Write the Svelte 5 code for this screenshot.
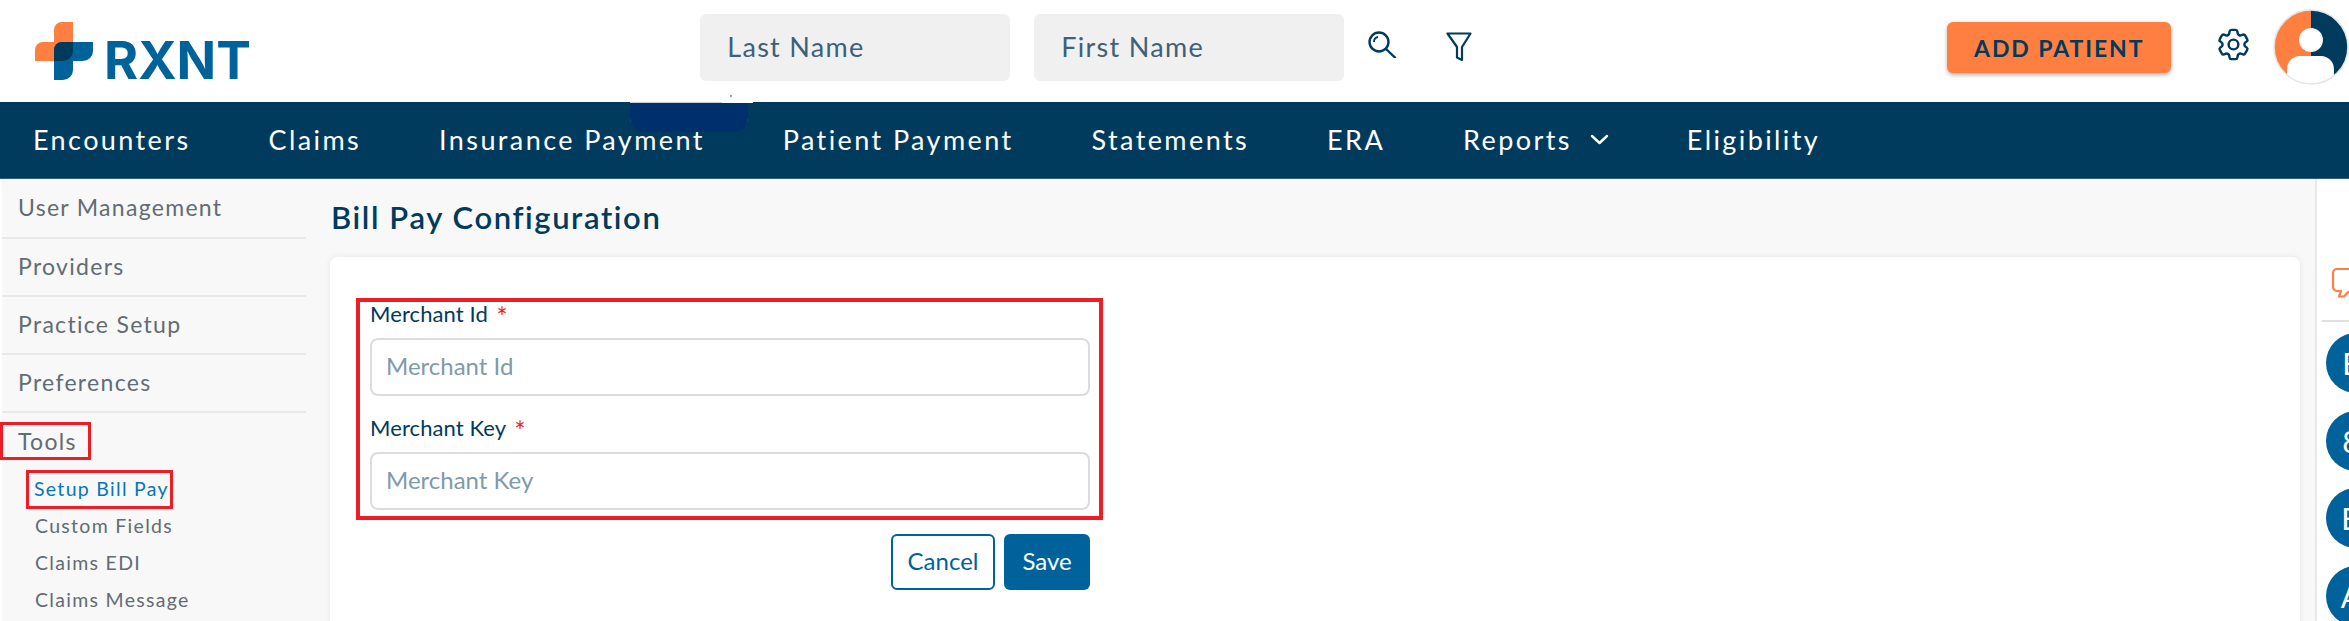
<script>
  const nav = ['Encounters', 'Claims', 'Insurance Payment', 'Patient Payment', 'Statements', 'ERA', 'Reports', 'Eligibility'];
  const side = ['User Management', 'Providers', 'Practice Setup', 'Preferences'];
  const sub = ['Custom Fields', 'Claims EDI', 'Claims Message'];
  const badges = ['E', '8', 'B', 'A'];
</script>

<div class="page">
  <header class="top">
    <div class="logo">
      <svg class="mark" width="58" height="58" viewBox="0 0 58 58">
        <path d="M19 20V8a8 8 0 0 1 8-8h11v39H0V28a8 8 0 0 1 8-8z" fill="#ff7f41" />
        <path d="M19 28a8 8 0 0 1 8-8h31v9a10 10 0 0 1-10 10H38v9a10 10 0 0 1-10 10h-9z" fill="#00629b" />
        <path d="M19 28a8 8 0 0 1 8-8h11v9a10 10 0 0 1-10 10h-9z" fill="#003a5d" />
      </svg>
      <span class="brand">RXNT</span>
    </div>
    <div class="search">
      <div class="field">Last Name</div>
      <div class="field">First Name</div>
      <svg class="ic-search" width="30" height="27" viewBox="0 0 30 27" fill="none" stroke="#003a5d" stroke-width="2.4">
        <circle cx="12" cy="11" r="9.500" />
        <path d="M7 11a5 5 0 0 1 4-5" stroke-width="1.8" />
        <path d="M19 18l9 8.500" stroke-linecap="round" />
      </svg>
      <svg class="ic-filter" width="26" height="30" viewBox="0 0 26 30" fill="none" stroke="#003a5d" stroke-width="2.2" stroke-linejoin="round">
        <path d="M1.500 1.500h23L16 15v13l-5-2.500V15z" />
      </svg>
    </div>
    <button class="add">ADD PATIENT</button>
    <svg class="ic-gear" width="39" height="39" viewBox="0 0 24 24" fill="none" stroke="#003a5d" stroke-width="1.5">
      <path d="M9.594 3.94c.09-.542.56-.94 1.11-.94h2.593c.55 0 1.02.398 1.11.94l.213 1.281c.063.374.313.686.645.87.074.04.147.083.22.127.325.196.72.257 1.075.124l1.217-.456a1.125 1.125 0 0 1 1.37.49l1.296 2.247a1.125 1.125 0 0 1-.26 1.431l-1.003.827c-.293.241-.438.613-.43.992a7.723 7.723 0 0 1 0 .255c-.008.378.137.75.43.991l1.004.827c.424.35.534.955.26 1.43l-1.298 2.247a1.125 1.125 0 0 1-1.369.491l-1.217-.456c-.355-.133-.75-.072-1.076.124a6.47 6.47 0 0 1-.22.128c-.331.183-.581.495-.644.869l-.213 1.281c-.09.543-.56.94-1.11.94h-2.594c-.55 0-1.019-.398-1.11-.94l-.213-1.281c-.062-.374-.312-.686-.644-.87a6.52 6.52 0 0 1-.22-.127c-.325-.196-.72-.257-1.076-.124l-1.217.456a1.125 1.125 0 0 1-1.369-.49l-1.297-2.247a1.125 1.125 0 0 1 .26-1.431l1.004-.827c.292-.24.437-.613.43-.991a6.932 6.932 0 0 1 0-.255c.007-.38-.138-.751-.43-.992l-1.004-.827a1.125 1.125 0 0 1-.26-1.43l1.297-2.247a1.125 1.125 0 0 1 1.37-.491l1.216.456c.356.133.751.072 1.076-.124.072-.044.146-.086.22-.128.332-.183.582-.495.644-.869l.214-1.28Z" />
      <circle cx="12" cy="12" r="3" />
    </svg>
    <svg class="avatar" width="76" height="76" viewBox="0 0 76 76">
      <defs><clipPath id="av"><circle cx="38" cy="38" r="37" /></clipPath></defs>
      <g clip-path="url(#av)">
        <rect width="38" height="76" fill="#ff7f41" />
        <rect x="38" width="38" height="76" fill="#003a5d" />
        <circle cx="38" cy="31" r="12" fill="#fff" />
        <rect x="14" y="47" width="47" height="40" rx="13" fill="#fff" />
      </g>
      <circle cx="38" cy="38" r="37" fill="none" stroke="#e4e6e8" stroke-width="1.5" />
    </svg>
  </header>

  <nav class="nav">
    {#each nav as item}
      <span class="nav-item">
        {item}
        {#if item === 'Reports'}
          <svg class="chev" width="19" height="11" viewBox="0 0 19 11" fill="none" stroke="#fff" stroke-width="2.4" stroke-linecap="round" stroke-linejoin="round"><path d="M2 2l7.500 7L17 2" /></svg>
        {/if}
      </span>
    {/each}
    <div class="smudge"></div>
    <div class="notch"></div>
  </nav>

  <div class="body">
    <aside class="side">
      {#each side as s}
        <div class="side-item">{s}</div>
      {/each}
      <div class="tools"><span>Tools</span></div>
      <div class="active"><span>Setup Bill Pay</span></div>
      {#each sub as s}
        <div class="sub">{s}</div>
      {/each}
    </aside>

    <main class="main">
      <h1>Bill Pay Configuration</h1>
      <section class="card">
        <div class="marked">
          <label for="mid">Merchant Id <b>*</b></label>
          <input id="mid" placeholder="Merchant Id" />
          <label class="second" for="mkey">Merchant Key <b>*</b></label>
          <input id="mkey" placeholder="Merchant Key" />
        </div>
        <div class="actions">
          <button class="cancel">Cancel</button>
          <button class="save">Save</button>
        </div>
      </section>
    </main>

    <aside class="rail">
      <div class="chat">
        <svg width="40" height="30" viewBox="0 0 40 30" fill="none" stroke="#ff7f41" stroke-width="2.2" stroke-linejoin="round">
          <path d="M5 1h32a4 4 0 0 1 4 4v14a4 4 0 0 1-4 4H20c-2 0-5 1-8 5.500L7 28.500l2-5.500H5a4 4 0 0 1-4-4V5a4 4 0 0 1 4-4z" />
        </svg>
      </div>
      {#each badges as b}
        <div class="badge">{b}</div>
      {/each}
    </aside>
  </div>
</div>

<style>
  :global(body) {
    margin: 0;
    background: #fff;
  }
  .page {
    width: 2349px;
    height: 621px;
    overflow: hidden;
    font-family: Lato, "Noto Sans", sans-serif;
    color: #003a5d;
  }
  .top {
    height: 102px;
    display: flex;
    align-items: center;
    background: #fff;
    position: relative;
  }
  .logo {
    display: flex;
    align-items: flex-start;
    margin: 10px 0 0 35px;
    width: 666px;
  }
  .brand {
    font-family: Inter, sans-serif;
    font-weight: 700;
    font-size: 52px;
    line-height: 58px;
    color: #00629b;
    margin: 10px 0 0 11px;
  }
  .search {
    display: flex;
    align-items: center;
    gap: 24px;
    width: 1248.500px;
    margin-top: -7px;
  }
  .field {
    width: 310px;
    height: 67px;
    box-sizing: border-box;
    background: #f0f0f0;
    border-radius: 6px;
    padding-left: 27px;
    font-size: 27px;
    letter-spacing: 1.3px;
    line-height: 66px;
    color: #3e6078;
  }
  .ic-search {
    margin-left: -1px;
    margin-bottom: 6px;
  }
  .ic-filter {
    margin-left: 25px;
    margin-bottom: 2px;
  }
  .add {
    width: 224px;
    height: 51px;
    border: 0;
    border-radius: 6px;
    background: #ff7f41;
    color: #003a5d;
    font: 700 23px Lato, sans-serif;
    letter-spacing: 1.9px;
    box-shadow: 0 2px 4px rgba(0, 0, 0, 0.3);
    margin-top: -7px;
  }
  .ic-gear {
    margin: -14px 0 0 43px;
  }
  .avatar {
    margin: -9px 0 0 20px;
  }
  .nav {
    height: 76px;
    background: #003a5d;
    display: flex;
    align-items: center;
    gap: 78px;
    padding-left: 33px;
    position: relative;
    border-bottom: 1px solid #2c5f7e;
    box-sizing: content-box;
  }
  .nav-item {
    font-size: 27px;
    letter-spacing: 2.400px;
    color: #fff;
    display: flex;
    align-items: center;
    gap: 18px;
    margin-top: -2px;
  }
  .smudge {
    position: absolute;
    left: 630px;
    top: 1px;
    width: 118px;
    height: 29px;
    background: #00306b;
    border-radius: 0 0 14px 14px;
    box-shadow: 0 -1px 0 #c4ccd8;
  }
  .notch {
    position: absolute;
    left: 722px;
    top: -1px;
    width: 31px;
    height: 2px;
    background: #fff;
  }
  .notch::before {
    content: "";
    position: absolute;
    left: 8px;
    top: -6px;
    width: 2px;
    height: 2px;
    background: #8f9bb0;
  }
  .body {
    display: flex;
    height: 442px;
  }
  .side {
    width: 304px;
    margin-left: 2px;
    padding-right: 2px;
    flex-shrink: 0;
    background: #f8f8f8;
    font-size: 23px;
    letter-spacing: 1.3px;
    color: #636b74;
    box-sizing: content-box;
  }
  .side-item {
    height: 56px;
    line-height: 54px;
    padding-left: 16px;
    border-bottom: 2px solid #e9e9e9;
  }
  .side-item:first-child {
    height: 58px;
    line-height: 56px;
  }
  .tools {
    margin: 9px 0 0 -2px;
  }
  .tools span {
    display: block;
    box-sizing: border-box;
    width: 91px;
    height: 38px;
    line-height: 32px;
    padding-left: 15px;
    border: 3.500px solid #ee1c25;
  }
  .active {
    margin: 10px 0 0 24px;
    font-size: 19.500px;
    color: #0a74b9;
  }
  .active span {
    display: block;
    box-sizing: border-box;
    width: 147px;
    height: 39px;
    line-height: 32px;
    padding-left: 5px;
    border: 3.500px solid #ee1c25;
    white-space: nowrap;
  }
  .sub {
    height: 37px;
    line-height: 34px;
    padding-left: 33px;
    font-size: 19.500px;
  }
  .main {
    width: 2009px;
    flex-shrink: 0;
    box-sizing: border-box;
    background: #f8f8f8;
    padding: 0 15px 0 22px;
    border-right: 2px solid #e8e8e8;
  }
  h1 {
    margin: 0 0 0 1px;
    height: 78px;
    line-height: 76px;
    font-size: 31px;
    font-weight: 600;
    letter-spacing: 1.600px;
  }
  .card {
    height: 400px;
    background: #fff;
    border-radius: 8px;
    box-shadow: 0 0 6px rgba(0, 0, 0, 0.08);
    padding: 41px 0 0 26px;
    box-sizing: border-box;
  }
  .marked {
    width: 747px;
    height: 222px;
    box-sizing: border-box;
    border: 4px solid #ee1c25;
    padding: 0 9px 0 10px;
    display: flex;
    flex-direction: column;
  }
  label {
    display: block;
    height: 36px;
    line-height: 24px;
    font-size: 22px;
    letter-spacing: 0.1px;
    color: #003a5d;
  }
  label b {
    color: #f01c24;
    font-weight: 400;
    font-size: 26px;
    line-height: 20px;
    vertical-align: -5px;
    margin-left: 3px;
  }
  .second {
    margin-top: 20px;
  }
  input {
    width: 100%;
    height: 58px;
    flex-shrink: 0;
    box-sizing: border-box;
    border: 2px solid #dcdcdc;
    border-radius: 8px;
    padding: 0 14px 3px;
    font: 24px Lato, sans-serif;
    background: #fff;
    outline: none;
  }
  input::placeholder {
    color: #7f9aaa;
    opacity: 1;
  }
  .actions {
    width: 734px;
    display: flex;
    justify-content: flex-end;
    gap: 9px;
    margin-top: 14px;
  }
  .actions button {
    height: 56px;
    border-radius: 6px;
    font: 24px Lato, sans-serif;
    box-sizing: border-box;
    padding: 0 0 4px;
  }
  .cancel {
    width: 104px;
    background: #fff;
    color: #00629b;
    border: 2px solid #00629b;
  }
  .save {
    width: 86px;
    background: #00629b;
    color: #fff;
    border: 0;
  }
  .rail {
    width: 32px;
    flex-shrink: 0;
    padding-left: 9px;
    background: #fff;
    box-sizing: border-box;
  }
  .chat {
    height: 143px;
    box-sizing: border-box;
    padding: 89px 0 0 10px;
    margin-left: -4px;
    border-bottom: 2px solid #e0e0e0;
    width: 60px;
  }
  .chat svg {
    display: block;
  }
  .badge {
    width: 60px;
    height: 60px;
    box-sizing: border-box;
    padding-right: 10px;
    flex-shrink: 0;
    margin-bottom: 17.500px;
    border-radius: 50%;
    background: #00629b;
    color: #fff;
    font-size: 30px;
    text-align: center;
    line-height: 60px;
  }
  .chat + .badge {
    margin-top: 11px;
  }
</style>
